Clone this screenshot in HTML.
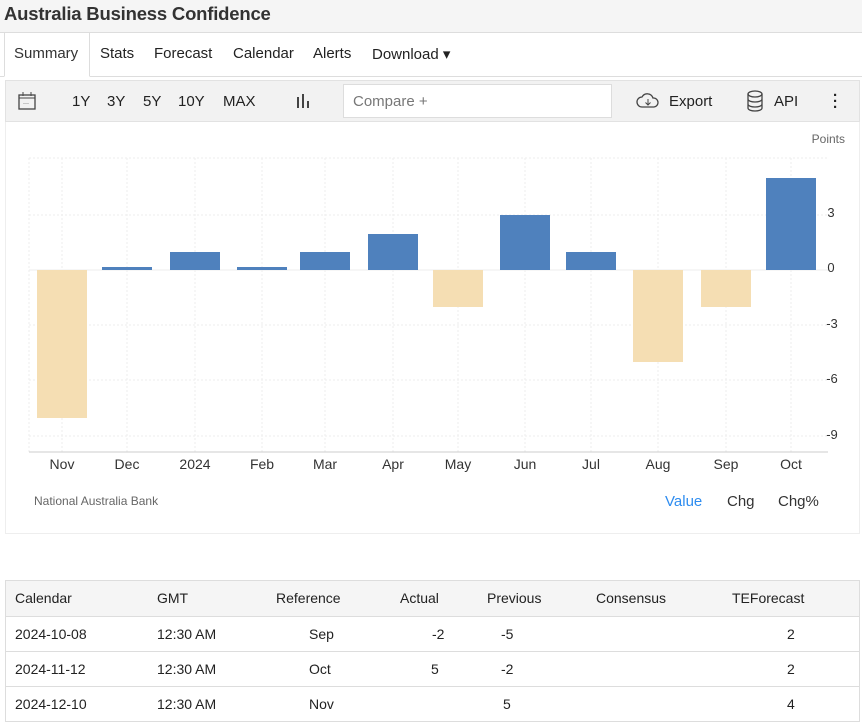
<!DOCTYPE html>
<html><head><meta charset="utf-8"><style>
*{box-sizing:border-box;margin:0;padding:0}
body{width:862px;height:723px;background:#fff;font-family:"Liberation Sans",Arial,sans-serif;color:#222;position:relative;overflow:hidden}
.a{position:absolute}
.title{left:0;top:0;width:862px;height:33px;background:#f5f5f5;border-bottom:1px solid #ddd;font-size:18.5px;font-weight:bold;padding:3px 0 0 4px;color:#333;letter-spacing:-0.2px}
.tabs{top:33px;left:0;width:862px;height:44px;border-bottom:1px solid #ddd;font-size:15px}
.tabs span{position:absolute;top:12px}
.tb{left:5px;top:80px;width:855px;height:42px;background:#f2f2f2;border:1px solid #e2e2e2;font-size:15px}
.tb span{position:absolute;top:12px}
.tbl{left:5px;top:580px;width:855px;height:142px;border:1px solid #ddd;font-size:14px}
.tbl div{position:absolute}
.tbl span{position:absolute}
.r{left:0;width:853px;height:35px;border-top:1px solid #ddd}
.r span{top:9px}
</style></head><body>
<div class="a title">Australia Business Confidence</div>
<div class="a tabs">
<div class="a" style="left:4px;top:0;width:86px;height:44px;border:1px solid #ddd;border-bottom:1px solid #fff;border-top:none;background:#fff"></div>
<span style="left:14px;color:#333">Summary</span><span style="left:100px">Stats</span><span style="left:154px">Forecast</span><span style="left:233px">Calendar</span><span style="left:313px">Alerts</span><span style="left:372px">Download ▾</span>
</div>
<div class="a tb">
<svg class="a" style="left:12px;top:10px" width="18" height="20"><rect x="1" y="4" width="16" height="14" fill="none" stroke="#444" stroke-width="1.3"/><line x1="1" y1="7" x2="17" y2="7" stroke="#444"/><line x1="5" y1="1" x2="5" y2="5" stroke="#444"/><line x1="13" y1="1" x2="13" y2="5" stroke="#444"/><text x="5" y="14" font-size="6">···</text></svg>
<span style="left:66px">1Y</span><span style="left:101px">3Y</span><span style="left:137px">5Y</span><span style="left:172px">10Y</span><span style="left:217px">MAX</span>
<svg class="a" style="left:290px;top:12px" width="16" height="16"><path d="M2 4v11M7 1v14M12 8v7" stroke="#444" stroke-width="2"/></svg>
<div class="a" style="left:337px;top:3px;width:269px;height:34px;background:#fff;border:1px solid #ddd"></div>
<span style="left:347px;color:#777">Compare +</span>
<svg class="a" style="left:630px;top:10px" width="24" height="20"><path d="M6 16a5 5 0 0 1 0-10a6 6 0 0 1 11 1a4 4 0 0 1 1 9z" fill="none" stroke="#444" stroke-width="1.3"/><path d="M12 8v6M9.5 11.5l2.5 2.5 2.5-2.5" stroke="#444" fill="none"/></svg>
<span style="left:663px">Export</span>
<svg class="a" style="left:740px;top:9px" width="18" height="22"><ellipse cx="9" cy="4" rx="7" ry="3" fill="none" stroke="#444" stroke-width="1.3"/><path d="M2 4v14c0 4 14 4 14 0V4M2 9c0 4 14 4 14 0M2 14c0 4 14 4 14 0" fill="none" stroke="#444" stroke-width="1.3"/></svg>
<span style="left:768px">API</span>
<span style="left:827px;font-weight:bold;line-height:6px;top:12px">·<br>·<br>·</span>
</div>
<div class="a" style="left:5px;top:122px;width:855px;height:412px;border:1px solid #eee;border-top:none"></div>
<svg class="a" style="left:0;top:0" width="862" height="540" font-family="Liberation Sans,Arial,sans-serif">
<text x="845" y="143" font-size="12" fill="#666" text-anchor="end">Points</text>
<g stroke="#eee" stroke-dasharray="2,2">
<line x1="29" y1="158" x2="828" y2="158"/><line x1="29" y1="215" x2="828" y2="215"/><line x1="29" y1="325" x2="828" y2="325"/><line x1="29" y1="380" x2="828" y2="380"/><line x1="29" y1="436" x2="828" y2="436"/>
<line x1="29" y1="158" x2="29" y2="452"/>
<line x1="62" y1="158" x2="62" y2="452"/><line x1="127" y1="158" x2="127" y2="452"/><line x1="195" y1="158" x2="195" y2="452"/><line x1="262" y1="158" x2="262" y2="452"/><line x1="325" y1="158" x2="325" y2="452"/><line x1="393" y1="158" x2="393" y2="452"/><line x1="458" y1="158" x2="458" y2="452"/><line x1="525" y1="158" x2="525" y2="452"/><line x1="591" y1="158" x2="591" y2="452"/><line x1="658" y1="158" x2="658" y2="452"/><line x1="726" y1="158" x2="726" y2="452"/><line x1="791" y1="158" x2="791" y2="452"/>
</g>
<line x1="29" y1="452" x2="828" y2="452" stroke="#ccc"/>
<line x1="29" y1="270" x2="828" y2="270" stroke="#eee"/>
<g fill="#f5deb3">
<rect x="37" y="270" width="50" height="148"/><rect x="433" y="270" width="50" height="37"/><rect x="633" y="270" width="50" height="92"/><rect x="701" y="270" width="50" height="37"/>
</g>
<g fill="#4f81bd">
<rect x="102" y="267" width="50" height="3"/><rect x="170" y="252" width="50" height="18"/><rect x="237" y="267" width="50" height="3"/><rect x="300" y="252" width="50" height="18"/><rect x="368" y="234" width="50" height="36"/><rect x="500" y="215" width="50" height="55"/><rect x="566" y="252" width="50" height="18"/><rect x="766" y="178" width="50" height="92"/>
</g>
<g font-size="14" fill="#333" text-anchor="middle">
<text x="62" y="469">Nov</text><text x="127" y="469">Dec</text><text x="195" y="469">2024</text><text x="262" y="469">Feb</text><text x="325" y="469">Mar</text><text x="393" y="469">Apr</text><text x="458" y="469">May</text><text x="525" y="469">Jun</text><text x="591" y="469">Jul</text><text x="658" y="469">Aug</text><text x="726" y="469">Sep</text><text x="791" y="469">Oct</text>
</g>
<g font-size="13" fill="#333" text-anchor="middle">
<text x="831" y="217">3</text><text x="831" y="272">0</text><text x="832" y="328">-3</text><text x="832" y="383">-6</text><text x="832" y="439">-9</text>
</g>
<text x="34" y="505" font-size="12" fill="#666">National Australia Bank</text>
<text x="665" y="506" font-size="15" fill="#2d8cf0">Value</text>
<text x="727" y="506" font-size="15" fill="#333">Chg</text>
<text x="778" y="506" font-size="15" fill="#333">Chg%</text>
</svg>
<div class="a tbl">
<div style="left:0;top:0;width:853px;height:35px;background:#f5f5f5">
<span style="left:9px;top:9px">Calendar</span><span style="left:151px;top:9px">GMT</span><span style="left:270px;top:9px">Reference</span><span style="left:394px;top:9px">Actual</span><span style="left:481px;top:9px">Previous</span><span style="left:590px;top:9px">Consensus</span><span style="left:726px;top:9px">TEForecast</span>
</div>
<div class="r" style="top:35px"><span style="left:9px">2024-10-08</span><span style="left:151px">12:30 AM</span><span style="left:303px">Sep</span><span style="left:426px">-2</span><span style="left:495px">-5</span><span style="left:781px">2</span></div>
<div class="r" style="top:70px"><span style="left:9px">2024-11-12</span><span style="left:151px">12:30 AM</span><span style="left:303px">Oct</span><span style="left:425px">5</span><span style="left:495px">-2</span><span style="left:781px">2</span></div>
<div class="r" style="top:105px"><span style="left:9px">2024-12-10</span><span style="left:151px">12:30 AM</span><span style="left:303px">Nov</span><span style="left:497px">5</span><span style="left:781px">4</span></div>
</div>
</body></html>
